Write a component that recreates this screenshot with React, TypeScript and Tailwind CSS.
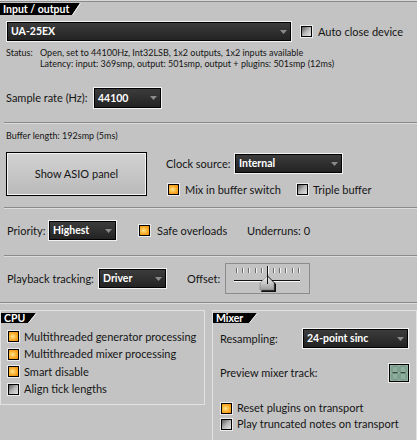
import React from "react";

function Tab({ label, h, w }: { label: string; h: string; w: string }) {
  return (
    <div className={`flex ${h}`}>
      <div
        className={`bg-black text-white font-bold text-[10.5px] leading-none flex items-center pl-[3px] ${w}`}
      >
        {label}
      </div>
      <svg width="9" height="100%" viewBox="0 0 9 12" preserveAspectRatio="none">
        <polygon points="0,0 8,0 0,12" fill="#000" />
        <line x1="0.5" y1="12" x2="8.5" y2="0" stroke="#f4f4f4" strokeWidth="1" />
      </svg>
    </div>
  );
}

function Select({ value, className }: { value: string; className: string }) {
  return (
    <div className={`border border-[#f2f2f2] shrink-0 ${className}`}>
      <div className="h-full border border-black bg-linear-to-b from-[#3c3c3c] to-[#232323] flex items-center justify-between pl-[3px] pr-[3px]">
        <span className="text-white font-bold text-[10.5px] leading-none">{value}</span>
        <svg width="7" height="4" viewBox="0 0 7 4">
          <polygon points="0,0 7,0 3.5,4" fill="#8a8a8a" />
        </svg>
      </div>
    </div>
  );
}

function Check({ on }: { on?: boolean }) {
  return (
    <span className="block w-[13px] h-[13px] border border-[#ececec] shrink-0">
      <span
        className={`block w-full h-full border border-black ${
          on
            ? "bg-radial-[at_40%_50%] from-[#ffe690] via-[#fbb030] to-[#ea8a00]"
            : "bg-linear-to-br from-[#5a5a5a] via-[#b8b8b8] to-[#e4e4e4]"
        }`}
      />
    </span>
  );
}

function Sep({ inset }: { inset?: boolean }) {
  return (
    <div
      className={`h-[2px] shrink-0 border-t border-[#8a8a8a] bg-[#dcdcdc] ${
        inset ? "ml-[4px]" : ""
      }`}
    />
  );
}

function Slider() {
  const ticks = Array.from({ length: 11 }, (_, i) => 10 + i * 6.17);
  return (
    <div className="w-[85px] h-[31px] border border-[#8c8c8c] shrink-0">
      <svg width="83" height="29" viewBox="0 0 83 29">
        {ticks.map((x, i) =>
          i === 5 ? null : (
            <g key={i}>
              <rect x={Math.round(x)} y="4" width="1" height="5" fill="#6a6a6a" />
              <rect x={Math.round(x) + 1} y="4" width="1" height="5" fill="#f4f4f4" />
            </g>
          )
        )}
        <rect x="8" y="16" width="66" height="1" fill="#111" />
        <rect x="8" y="17" width="66" height="1" fill="#f6f6f6" />
        <defs>
          <linearGradient id="th" x1="0" y1="0" x2="0" y2="1">
            <stop offset="0" stopColor="#f2f2f2" />
            <stop offset="1" stopColor="#9c9c9c" />
          </linearGradient>
        </defs>
        <polygon points="35,28 35,28 50,28 50,20 42,12" fill="#111" />
        <polygon points="34,26 34,19 41,12 48,19 48,26" fill="url(#th)" stroke="#7a7a7a" strokeWidth="0.6" />
        <rect x="41" y="2" width="1" height="18" fill="#111" />
        <rect x="42" y="2" width="1" height="8" fill="#f4f4f4" />
      </svg>
    </div>
  );
}

function Lcd() {
  const seg = (dx: number) => (
    <g>
      <rect x={dx + 1} y="1" width="5" height="1" fill="#6f8d7e" />
      <rect x={dx} y="2" width="1" height="6" fill="#6f8d7e" />
      <rect x={dx + 6} y="2" width="1" height="6" fill="#6f8d7e" />
      <rect x={dx + 1} y="8" width="5" height="1.4" fill="#2f3f36" />
      <rect x={dx} y="10" width="1" height="6" fill="#6f8d7e" />
      <rect x={dx + 6} y="10" width="1" height="6" fill="#6f8d7e" />
      <rect x={dx + 1} y="16" width="5" height="1" fill="#6f8d7e" />
    </g>
  );
  return (
    <div className="w-[22px] h-[20px] border border-[#ececec] shrink-0">
      <div className="w-full h-full border border-black bg-[#8fae9e]">
        <svg width="18" height="16" viewBox="0 0 18 18" preserveAspectRatio="none">
          {seg(1.5)}
          {seg(9.5)}
        </svg>
      </div>
    </div>
  );
}

export default function App() {
  return (
    <div className="w-[417px] h-[440px] overflow-hidden whitespace-nowrap bg-[#c3c3c3] text-[#151515] text-[11px] leading-[14px] font-[Lato,sans-serif] flex flex-col">
      <div className="h-[2px] shrink-0 border-t border-[#d8d8d8] bg-[#8a8a8a]" />
      <div className="mt-px">
        <Tab label="Input / output" h="h-[12px]" w="w-[72px]" />
      </div>

      <div className="mt-[6px] h-[21px] flex items-center pl-[6px]">
        <Select value="UA-25EX" className="w-[286px] h-[21px]" />
        <div className="ml-[8px]">
          <Check />
        </div>
        <span className="ml-[5px]">Auto close device</span>
      </div>

      <div className="mt-[5px] pl-[6px] text-[9px] leading-[11px] flex">
        <span className="w-[34px] shrink-0">Status:</span>
        <div className="flex flex-col">
          <span>Open, set to 44100Hz, Int32LSB, 1x2 outputs, 1x2 inputs available</span>
          <span>Latency: input: 369smp, output: 501smp, output + plugins: 501smp (12ms)</span>
        </div>
      </div>

      <div className="mt-[18px] h-[22px] flex items-center pl-[6px]">
        <span className="w-[87px] shrink-0">Sample rate (Hz):</span>
        <Select value="44100" className="w-[69px] h-[22px]" />
      </div>

      <div className="mt-[13px]">
        <Sep inset />
      </div>

      <div className="mt-[6px] h-[11px] pl-[6px] text-[9px] leading-[11px]">
        Buffer length: 192smp (5ms)
      </div>

      <div className="mt-[11px] flex items-start pl-[6px]">
        <button className="w-[141px] h-[44px] border border-black shrink-0">
          <div className="w-full h-full border border-[#f4f4f4] bg-linear-to-b from-[#d2d2d2] via-[#c6c6c6] to-[#bababa] flex items-center justify-center">
            Show ASIO panel
          </div>
        </button>
        <div className="ml-[19px] pt-px flex flex-col">
          <div className="h-[21px] flex items-center">
            <span className="w-[68px] shrink-0">Clock source:</span>
            <Select value="Internal" className="w-[109px] h-[21px]" />
          </div>
          <div className="mt-[9px] h-[13px] flex items-center pl-px">
            <div className="w-[129px] shrink-0 flex items-center">
              <Check on />
              <span className="ml-[5px]">Mix in buffer switch</span>
            </div>
            <Check />
            <span className="ml-[4px]">Triple buffer</span>
          </div>
        </div>
      </div>

      <div className="mt-[11px]">
        <Sep inset />
      </div>

      <div className="mt-[11px] h-[21px] flex items-center pl-[7px]">
        <span className="w-[41px] shrink-0">Priority:</span>
        <Select value="Highest" className="w-[69px] h-[21px]" />
        <div className="ml-[21px]">
          <Check on />
        </div>
        <span className="ml-[6px] w-[90px] shrink-0">Safe overloads</span>
        <span>Underruns: 0</span>
      </div>

      <div className="mt-[14px]">
        <Sep inset />
      </div>

      <div className="mt-[6px] h-[31px] flex items-center pl-[7px]">
        <span className="w-[91px] shrink-0">Playback tracking:</span>
        <Select value="Driver" className="w-[69px] h-[21px]" />
        <span className="ml-[20px] w-[38px] shrink-0">Offset:</span>
        <Slider />
      </div>

      <div className="mt-[8px]">
        <Sep />
      </div>

      <div className="mt-[6px] flex items-start">
        <div className="w-[205px] h-[95px] border border-[#e2e2e2] flex flex-col shrink-0">
          <div className="mt-[2px]">
            <Tab label="CPU" h="h-[10px]" w="w-[27px]" />
          </div>
          <div className="mt-[5px] pl-[6px] flex flex-col">
            {[
              ["Multithreaded generator processing", true],
              ["Multithreaded mixer processing", true],
              ["Smart disable", true],
              ["Align tick lengths", false],
            ].map(([label, on]) => (
              <div key={label as string} className="h-[17.5px] flex items-center">
                <Check on={on as boolean} />
                <span className="ml-[4px]">{label as string}</span>
              </div>
            ))}
          </div>
        </div>

        <div className="ml-[7px] flex-1 h-[140px] border border-[#e2e2e2] flex flex-col">
          <div className="mt-[2px]">
            <Tab label="Mixer" h="h-[10px]" w="w-[36px]" />
          </div>
          <div className="mt-[5px] h-[21px] flex items-center pl-[7px]">
            <span className="w-[82px] shrink-0">Resampling:</span>
            <Select value="24-point sinc" className="w-[107px] h-[21px]" />
          </div>
          <div className="mt-[14px] h-[20px] flex items-center pl-[7px]">
            <span className="w-[168px] shrink-0">Preview mixer track:</span>
            <Lcd />
          </div>
          <div className="mt-[17px] pl-[7px] flex flex-col">
            <div className="h-[16px] flex items-center">
              <Check on />
              <span className="ml-[4px]">Reset plugins on transport</span>
            </div>
            <div className="h-[16px] flex items-center">
              <Check />
              <span className="ml-[4px]">Play truncated notes on transport</span>
            </div>
          </div>
        </div>
      </div>
    </div>
  );
}
